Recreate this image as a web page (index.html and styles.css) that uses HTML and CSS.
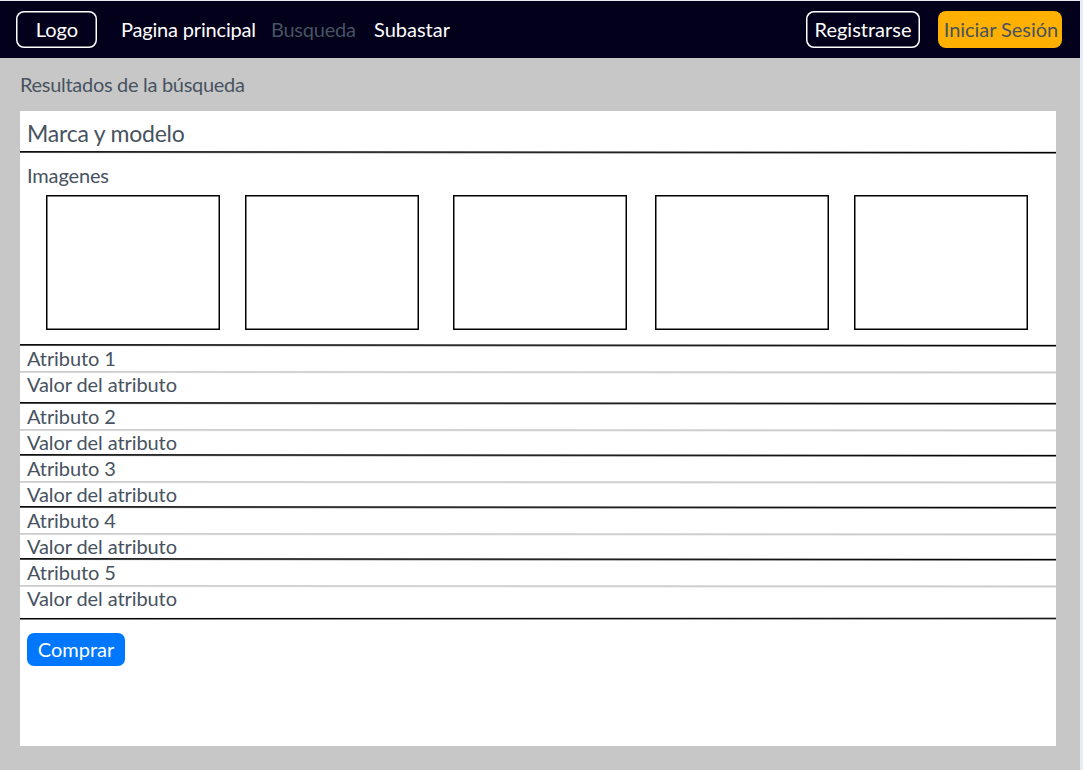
FILE: index.html
```
<!DOCTYPE html>
<html lang="es">
<head>
<meta charset="utf-8">
<title>Resultados de la búsqueda</title>
<link rel="stylesheet" href="styles.css">
</head>
<body>
<div class="page">
  <header class="topbar">
    <a class="outline logo">Logo</a>
    <nav class="nav">
      <a class="link home">Pagina principal</a>
      <a class="link current">Busqueda</a>
      <a class="link">Subastar</a>
    </nav>
    <a class="outline register">Registrarse</a>
    <a class="login">Iniciar Sesión</a>
  </header>
  <main class="content">
    <h1 class="heading">Resultados de la búsqueda</h1>
    <section class="panel">
      <h2 class="title">Marca y modelo</h2>
      <div class="rule"></div>
      <h3 class="label">Imagenes</h3>
      <div class="gallery">
        <svg class="frame f1" viewBox="0 0 174 135"><rect x=".75" y=".75" width="172.5" height="133.5"/></svg>
        <svg class="frame f2" viewBox="0 0 174 135"><rect x=".75" y=".75" width="172.5" height="133.5"/></svg>
        <svg class="frame f3" viewBox="0 0 174 135"><rect x=".75" y=".75" width="172.5" height="133.5"/></svg>
        <svg class="frame f4" viewBox="0 0 174 135"><rect x=".75" y=".75" width="172.5" height="133.5"/></svg>
        <svg class="frame" viewBox="0 0 174 135"><rect x=".75" y=".75" width="172.5" height="133.5"/></svg>
      </div>
      <div class="rule"></div>
      <div class="attribute">Atributo 1</div>
      <div class="rule light"></div>
      <div class="attribute roomy">Valor del atributo</div>
      <div class="rule"></div>
      <div class="attribute">Atributo 2</div>
      <div class="rule light"></div>
      <div class="attribute">Valor del atributo</div>
      <div class="rule"></div>
      <div class="attribute">Atributo 3</div>
      <div class="rule light"></div>
      <div class="attribute">Valor del atributo</div>
      <div class="rule"></div>
      <div class="attribute">Atributo 4</div>
      <div class="rule light"></div>
      <div class="attribute">Valor del atributo</div>
      <div class="rule"></div>
      <div class="attribute">Atributo 5</div>
      <div class="rule light"></div>
      <div class="attribute last">Valor del atributo</div>
      <div class="rule end"></div>
      <a class="buy">Comprar</a>
    </section>
  </main>
</div>
</body>
</html>
```
FILE: styles.css
```
* { box-sizing: border-box; }
body {
  margin: 0;
  padding-top: 1px;
  height: 770px;
  overflow: hidden;
  background: #e7ebf3;
  font: 20px/23px Lato, sans-serif;
  color: #475360;
}
.page {
  width: 1080px;
  height: 769px;
  background: #c7c7c7;
}
.topbar {
  display: flex;
  height: 57px;
  padding: 9.5px 18.5px 0 16px;
  background: #02001b;
  color: #fff;
}
.outline, .login {
  height: 37px;
  border-radius: 8px;
  line-height: 37px;
  text-align: center;
  white-space: nowrap;
}
.outline { box-shadow: inset 0 0 0 1.5px #fff; }
.logo { width: 81px; padding-left: 1px; }
.register { width: 114px; margin-left: auto; padding-left: 1px; }
.login {
  width: 124px;
  margin-left: 18px;
  padding-left: 3px;
  background: #ffb000;
  color: #475360;
  letter-spacing: -0.05px;
}
.nav {
  display: flex;
  margin-left: 24px;
  line-height: 37px;
  white-space: nowrap;
}
.link { width: 76px; }
.home { width: 150px; letter-spacing: -0.18px; }
.current { width: 103px; color: #475360; letter-spacing: -0.25px; }
.content { padding: 0 24px 0 20px; }
.heading, .title, .label { margin: 0; font-weight: 400; }
.heading {
  height: 52.5px;
  padding-top: 15px;
  font-size: 20px;
  letter-spacing: -0.3px;
}
.panel {
  height: 635px;
  background: #fff;
}
.title {
  height: 40.5px;
  padding: 8px 7px 0;
  font-size: 23px;
  line-height: 28px;
  letter-spacing: -0.22px;
}
/* Dividers fall slightly from left to right: each pixel row fades separately. */
.rule {
  height: 3px;
  background:
    linear-gradient(90deg, rgba(0,0,0,.95), rgba(0,0,0,.15)) 0 0 / 100% 1px no-repeat,
    linear-gradient(90deg, rgba(0,0,0,.7), #000) 0 1px / 100% 1px no-repeat,
    linear-gradient(90deg, rgba(0,0,0,0), rgba(0,0,0,.5)) 0 2px / 100% 1px no-repeat;
}
.end {
  background:
    linear-gradient(90deg, rgba(0,0,0,0), rgba(0,0,0,.3)) 0 0 / 100% 1px no-repeat,
    linear-gradient(90deg, #000, rgba(0,0,0,.9)) 0 1px / 100% 1px no-repeat,
    linear-gradient(90deg, rgba(0,0,0,.5), rgba(0,0,0,.3)) 0 2px / 100% 1px no-repeat;
}
.end { position: static; }
.light {
  margin: 1px 0 -1px;
  background:
    linear-gradient(90deg, rgba(199,199,199,.9), rgba(199,199,199,.5)) 0 0 / 100% 1px no-repeat,
    linear-gradient(90deg, rgba(199,199,199,.7), rgba(199,199,199,.95)) 0 1px / 100% 1px no-repeat,
    linear-gradient(90deg, rgba(199,199,199,0), rgba(199,199,199,.4)) 0 2px / 100% 1px no-repeat;
}
.label {
  height: 41px;
  padding: 10px 7px 0;
  font-size: 20px;
  letter-spacing: -0.15px;
}
.gallery {
  display: flex;
  height: 149px;
  padding-left: 26px;
}
.frame {
  width: 174px;
  height: 135px;
  fill: #fff;
  stroke: #000;
  stroke-width: 1.5;
}
.f1 { margin-right: 25px; }
.f2 { margin-right: 34px; }
.f3 { margin-right: 28px; }
.f4 { margin-right: 25px; }
.attribute {
  height: 23px;
  padding-left: 7px;
  letter-spacing: -0.09px;
}
.roomy { height: 29px; }
.last { height: 30px; }
.buy {
  display: block;
  width: 98px;
  height: 33px;
  margin: 13px 0 0 7px;
  border-radius: 7px;
  background: #0077ff;
  color: #fff;
  line-height: 33px;
  text-align: center;
}
```
